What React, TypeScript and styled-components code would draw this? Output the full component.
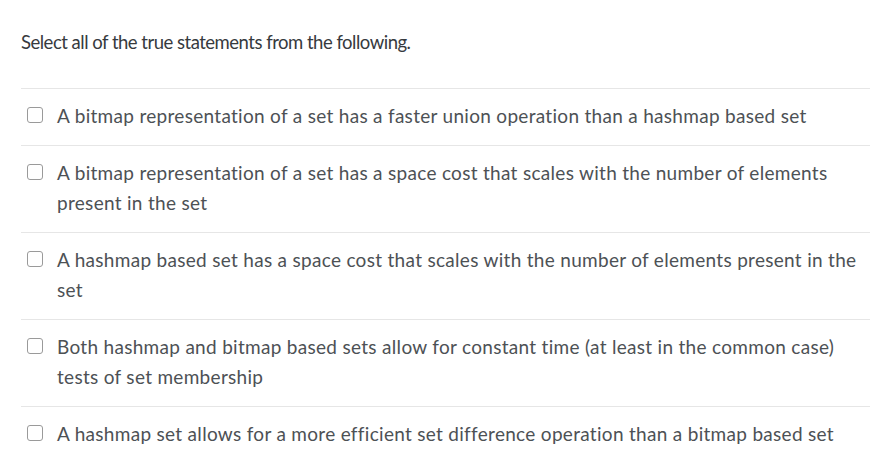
import React from "react";
import styled, { createGlobalStyle } from "styled-components";

const Global = createGlobalStyle`
  html, body { margin: 0; padding: 0; background: #ffffff; }
  body { font-family: Lato, "Open Sans", sans-serif; }
`;

const Page = styled.div`
  width: 874px;
  height: 470px;
  box-sizing: border-box;
  padding: 0 4px 0 21px;
  background: #ffffff;
  overflow: hidden;
`;

const Question = styled.div`
  padding: 29px 0 0 0;
  height: 59px;
  font-size: 18.5px;
  letter-spacing: -0.5px;
  line-height: 26px;
  color: #363a3e;
`;

const Answers = styled.div`
  display: flex;
  flex-direction: column;
`;

const Answer = styled.label`
  display: flex;
  align-items: flex-start;
  gap: 14px;
  border-top: 1px solid #e6e6e6;
  padding: 12px 0 14px 6px;
`;

const Box = styled.span`
  flex: 0 0 auto;
  width: 14px;
  height: 14px;
  margin-top: 6px;
  border: 1.5px solid #9a9a9a;
  border-radius: 3px;
  background: #fff;
`;

const AnswerText = styled.span`
  font-size: 19px;
  letter-spacing: 0.3px;
  line-height: 30px;
  color: #4d5155;
`;

const answers = [
  "A bitmap representation of a set has a faster union operation than a hashmap based set",
  "A bitmap representation of a set has a space cost that scales with the number of elements present in the set",
  "A hashmap based set has a space cost that scales with the number of elements present in the set",
  "Both hashmap and bitmap based sets allow for constant time (at least in the common case) tests of set membership",
  "A hashmap set allows for a more efficient set difference operation than a bitmap based set",
];

export default function App() {
  return (
    <Page>
      <Global />
      <Question>Select all of the true statements from the following.</Question>
      <Answers>
        {answers.map((a) => (
          <Answer key={a}>
            <Box />
            <AnswerText>{a}</AnswerText>
          </Answer>
        ))}
      </Answers>
    </Page>
  );
}
